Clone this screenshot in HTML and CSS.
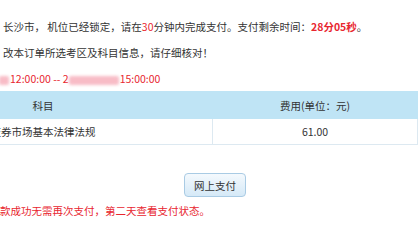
FILE: index.html
```html
<!DOCTYPE html>
<html lang="zh-CN">
<head>
<meta charset="utf-8">
<link rel="stylesheet" href="styles.css">
</head>
<body>
<div class="page">
  <div class="notice">
    <p class="line">长沙市， 机位已经锁定，请在<span class="red">30</span>分钟内完成支付。支付剩余时间：<b class="red">28分05秒</b>。</p>
    <p class="line">改本订单所选考区及科目信息，请仔细核对！</p>
    <p class="line red"><span class="blur b1"></span>12:00:00 -- 2<span class="blur b2"></span>15:00:00</p>
  </div>
  <table class="grid">
    <thead>
      <tr><th class="c1">科目</th><th class="c2">费用(单位：元)</th></tr>
    </thead>
    <tbody>
      <tr><td class="c1">证券市场基本法律法规</td><td class="c2">61.00</td></tr>
    </tbody>
  </table>
  <div class="actions"><button class="pay">网上支付</button></div>
  <p class="tip">款成功无需再次支付，第二天查看支付状态。</p>
</div>
</body>
</html>
```
FILE: styles.css
```css
html, body { margin: 0; padding: 0; background: #fff; }
body { width: 419px; height: 240px; overflow: hidden; font-family: "Noto Sans CJK SC", "Noto Sans", sans-serif; font-size: 10.5px; color: #333; }
.page { padding-top: 14px; }
.notice { margin-left: 3px; }
.line { margin: 0; line-height: 26px; height: 26px; white-space: nowrap; }
.red { color: #e8262f; }
b.red { font-weight: bold; }
.blur { display: inline-block; vertical-align: middle; height: 9px; background: #f8bcc6; filter: blur(1.5px); border-radius: 2px; }
.b1 { width: 10px; margin-left: -4px; margin-right: 1px; }
.b2 { width: 50px; margin: 0 1px 0 0; }
.grid { margin-left: -127px; width: 545px; border-collapse: collapse; margin-top: -1px; }
.grid th { background: #bfe4f5; font-weight: normal; height: 26px; padding: 0; text-align: center; border: 1px solid #bfe4f5; }
.grid td { height: 25px; padding: 0; text-align: center; border: 1px solid #dde9f1; }
.grid .c1 { width: 340px; }
.grid .c2 { width: 205px; }
.actions { display: flex; justify-content: center; padding-left: 11px; margin-top: 28px; }
.pay { width: 62px; height: 24px; padding: 0; font-family: inherit; font-size: 10.5px; color: #333; border: 1px solid #a9cbe4; border-radius: 4px; background: linear-gradient(#f4f9fd, #d5e9f7); }
.tip { margin: 1px 0 0 0; line-height: 26px; color: #e8262f; white-space: nowrap; }
```
